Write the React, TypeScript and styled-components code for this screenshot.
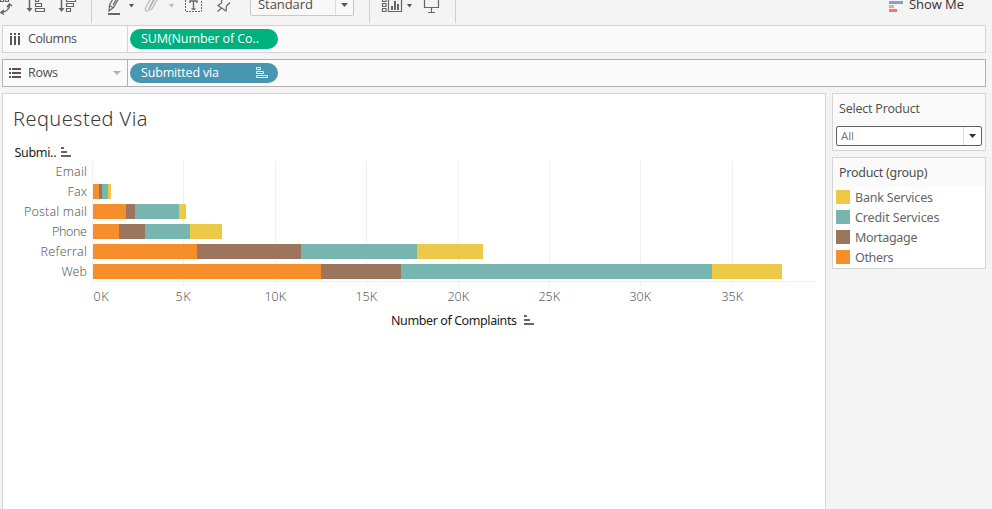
import React from 'react';
import styled, { createGlobalStyle } from 'styled-components';

const Global = createGlobalStyle`
  * { box-sizing: border-box; }
  body { margin: 0; background: #f4f4f4; font-family: "Noto Sans", "Open Sans", sans-serif; overflow: hidden; }
  svg { display: block; flex: none; }
`;

const Page = styled.div`
  width: 992px; height: 509px; overflow: hidden;
  display: flex; flex-direction: column; background: #f4f4f4; color: #4e4e4e;
`;
const Toolbar = styled.header`
  height: 25px; flex: none; display: flex; align-items: flex-start;
`;
const ToolGroup = styled.div<{ $w: number; $pad?: number }>`
  width: ${p => p.$w}px; height: 23px; flex: none; display: flex; padding-left: ${p => p.$pad ?? 0}px;
`;
const Divider = styled.div`
  width: 1px; height: 23px; flex: none; background: #d0d0d0;
`;
const FitSelect = styled.div`
  width: 104px; height: 16px; display: flex; background: #f8f8f8;
  border: 1px solid #c8c8c8; border-top: 0; border-radius: 0 0 2px 2px; padding-left: 7px;
`;
const FitArrow = styled.div`
  width: 18px; height: 15px; margin-left: auto; border-left: 1px solid #ddd; padding: 3px 0 0 5px;
`;
const ShowMe = styled.div`
  display: flex; margin-left: auto; padding-right: 28px; gap: 6px;
`;
const Lift = styled.div`
  height: 14px; margin-top: -4px;
`;
const Shelf = styled.section<{ $active?: boolean }>`
  height: 28px; width: 984px; flex: none; margin: 0 0 6px 2px; display: flex;
  background: #fafafa; border: 1px solid ${p => (p.$active ? '#b0b0b0' : '#d4d4d4')};
`;
const ShelfName = styled.div<{ $active?: boolean }>`
  width: 125px; display: flex; align-items: center; padding: 0 6px;
  border-right: 1px solid ${p => (p.$active ? '#b0b0b0' : '#d4d4d4')};
`;
const Pill = styled.div<{ $color: string }>`
  width: 148px; height: 20px; margin: 3px 2px; padding: 0 10px 0 10.5px; border-radius: 10px;
  display: flex; align-items: center; justify-content: space-between; background: ${p => p.$color};
`;
const Work = styled.main`
  display: flex; gap: 6px; flex: 1; margin-left: 2px; min-height: 0;
`;
const Sheet = styled.section`
  width: 824px; background: #fff; border: 1px solid #d4d4d4; border-bottom: 0;
`;
const SheetTitle = styled.div`
  height: 50px; padding: 18px 0 0 10px;
`;
const Side = styled.aside`
  width: 154px; display: flex; flex-direction: column; gap: 6px;
`;
const Card = styled.section<{ $h: number; $white?: boolean }>`
  height: ${p => p.$h}px; border: 1px solid #d4d4d4; background: ${p => (p.$white ? '#fff' : '#fafafa')};
`;
const CardHead = styled.div`
  height: 29px; padding: 0 6px; background: #fafafa; display: flex; align-items: center;
`;
const Select = styled.div`
  width: 146px; height: 20px; margin: 3px 0 0 3px; padding-left: 4px; background: #fff;
  border: 1px solid #5f5f5f; border-radius: 2px; display: flex; align-items: center; justify-content: space-between;
`;
const SelectArrow = styled.div`
  width: 18px; height: 18px; border-left: 1px solid #dcdcdc; display: flex; align-items: center; justify-content: center;
`;
const LegendRow = styled.div`
  height: 20px; padding-left: 3px; display: flex; align-items: center; gap: 5px;
`;
const Swatch = styled.span<{ $color: string }>`
  width: 14px; height: 14px; background: ${p => p.$color};
`;
const LabelSvg = styled.svg`overflow: visible;`;
const ShelfIcon = styled.svg`margin-right: 6px;`;
const MenuArrow = styled.svg`margin-left: auto;`;

type LabelProps = {
  text: string; width: number; size?: number; color?: string; weight?: number; font?: string; baseline?: number;
};

function Label({ text, width, size = 12.5, color = '#4e4e4e', weight = 400, font = 'Open Sans', baseline = 13 }: LabelProps) {
  return (
    <LabelSvg width={width} height="18">
      <text x="0" y={baseline} textLength={width} fontSize={size} fontWeight={weight} fontFamily={`"${font}", sans-serif`} fill={color}>{text}</text>
    </LabelSvg>
  );
}

const OTHERS = '#f58e2b', MORT = '#9c755f', CREDIT = '#76b5b0', BANK = '#ecc947';
const series = [OTHERS, MORT, CREDIT, BANK];
const rows = [
  { name: 'Email', left: 55.5, stops: [] as number[] },
  { name: 'Fax', left: 67.5, stops: [93, 99, 102, 108, 111] },
  { name: 'Postal mail', left: 24, stops: [93, 126, 135, 179, 186] },
  { name: 'Phone', left: 52, stops: [93, 119, 145, 190, 222] },
  { name: 'Referral', left: 40.5, stops: [93, 197, 301, 417, 483] },
  { name: 'Web', left: 61.5, stops: [93, 321, 401, 712, 782] },
];
const ticks = [
  { x: 92, label: '0K', left: 93.5, w: 15 }, { x: 183, label: '5K', left: 175.5, w: 15 },
  { x: 275, label: '10K', left: 264.5, w: 21.5 }, { x: 366, label: '15K', left: 355.5, w: 21.5 },
  { x: 458, label: '20K', left: 447.5, w: 21.5 }, { x: 549, label: '25K', left: 538.5, w: 21.5 },
  { x: 640, label: '30K', left: 629.5, w: 21.5 }, { x: 732, label: '35K', left: 721.5, w: 21.5 },
];
const legend = [
  { name: 'Bank Services', color: BANK, w: 78 },
  { name: 'Credit Services', color: CREDIT, w: 84.5 },
  { name: 'Mortagage', color: MORT, w: 62.5 },
  { name: 'Others', color: OTHERS, w: 38.5 },
];

const ChartSvg = styled.svg`
  font-family: "Noto Sans", sans-serif; font-size: 12.5px;
`;

function SortMark({ x, y }: { x: number; y: number }) {
  return <path d={`M${x} ${y}h3v2h-3z M${x} ${y + 4}h6v2h-6z M${x} ${y + 8}h10v2h-10z`} fill="#666" />;
}

function Chart() {
  return (
    <ChartSvg width="822" height="190" viewBox="3 144 822 190">
      <text x="14.5" y="157" textLength="42" fill="#1c1c1c">Submi..</text>
      <SortMark x={61} y={147} />
      {ticks.map(t => <rect key={t.x} x={t.x} y="161" width="1" height="125" fill="#f0f0f0" />)}
      <rect x="92" y="281" width="725" height="1" fill="#f0f0f0" />
      {rows.map((r, i) => (
        <g key={r.name}>
          <text x={r.left} y={176.4 + i * 20} textLength={87 - r.left} fontWeight="300" fill="#606060">{r.name}</text>
          {r.stops.slice(1).map((end, j) => (
            <rect key={j} x={r.stops[j]} y={164 + i * 20} width={end - r.stops[j]} height="15" fill={series[j]} />
          ))}
        </g>
      ))}
      {ticks.map(t => <text key={t.label} x={t.left} y="301.400" textLength={t.w} fontWeight="300" fill="#606060">{t.label}</text>)}
      <text x="391" y="325" textLength="126" fill="#1c1c1c">Number of Complaints</text>
      <SortMark x={524} y={315} />
    </ChartSvg>
  );
}

type ToolProps = { x: number; w: number; faded?: boolean; children: React.ReactNode };

function Tool({ x, w, faded, children }: ToolProps) {
  return (
    <svg width={w} height="23" viewBox={`${x} 0 ${w} 23`} fill="none" stroke={faded ? '#b8b8b8' : '#666'} strokeWidth="1.2">
      {children}
    </svg>
  );
}

function Caret({ x, color = '#555' }: { x: number; color?: string }) {
  return <path d={`M${x} 4h5l-2.500 3.500z`} fill={color} stroke="none" />;
}

function ToolbarContent() {
  return (
    <Toolbar>
      <ToolGroup $w={91}>
        <Tool x={0} w={20}>
          <path d="M1.500 12.500C6 12 9.500 9 9.500 4.500 M7 7l2.500-3 2.500 2 M4 10l-3 2.500 3 2" strokeWidth="1.500" />
          <path d="M0.500 0v1.500h3V0 M5.500 0v1.500h3V0" />
        </Tool>
        <Tool x={20} w={32}>
          <path d="M29.500 0v9" strokeWidth="1.500" />
          <path d="M26.500 8h6l-3 4z" fill="#666" stroke="none" />
          <path d="M35.500 -2h3v3.500h-3z M35.500 3.500h6v3h-6z M35.500 8.500h9v3h-9z" />
        </Tool>
        <Tool x={52} w={39}>
          <path d="M61.500 0v9" strokeWidth="1.500" />
          <path d="M58.500 8h6l-3 4z" fill="#666" stroke="none" />
          <path d="M66.500 -2h9v3.500h-9z M66.500 3.500h7v3h-7z M66.500 8.500h4v3h-4z" />
        </Tool>
      </ToolGroup>
      <Divider />
      <ToolGroup $w={158}>
        <Tool x={92} w={48}>
          <path d="M113.500 -2l-4 7-.500 6 4.500-3.500 5.500-9.500 M109.500 5.500l4 2.500 M113 5l3-5" />
          <path d="M108 13h12v2h-12z" fill="#666" stroke="none" />
          <Caret x={129} />
        </Tool>
        <Tool x={140} w={40} faded>
          <path d="M150.500 -1l-4.500 8c-2 4 1 5.500 3 2.500l6-10.500 M157.500 -1l-5 9c-1.500 3-4.500 2-3-1l4-7.500" />
          <Caret x={169} color="#b8b8b8" />
        </Tool>
        <Tool x={180} w={28}>
          <path d="M185.500 0v11.500h16V0" strokeWidth="1" strokeDasharray="2 1" />
          <path d="M190 3V1h7v2 M193.500 1v8 M191.500 9h4" strokeWidth="1.300" />
        </Tool>
        <Tool x={208} w={42}>
          <path d="M222 -1l-.500 4-3.500 2.500 8 5.500 .500-5 3.500-3.500 M221.500 8l-4 3.500" />
        </Tool>
      </ToolGroup>
      <ToolGroup $w={119}>
        <FitSelect>
          <Lift><Label text="Standard" width={55} size={13} /></Lift>
          <FitArrow><svg width="7" height="4" fill="#555"><path d="M0 0h7l-3.500 4z" /></svg></FitArrow>
        </FitSelect>
      </ToolGroup>
      <Divider />
      <ToolGroup $w={85}>
        <Tool x={370} w={46}>
          <path d="M382.500 -2h3.500v3.500h-3.500z M382.500 3.500h3.500v3h-3.500z M382.500 8.500h3.500v3h-3.500z M388.500 0v11.500h13V0" />
          <path d="M391 6h2v4h-2z M394 1h2v9h-2z M397 4h2v6h-2z" fill="#666" stroke="none" />
          <Caret x={407} />
        </Tool>
        <Tool x={416} w={39}>
          <path d="M424.500 0v7.500h14V0 M431.500 7.500v5 M428 12.500h7" />
        </Tool>
      </ToolGroup>
      <Divider />
      <ShowMe>
        <svg width="14" height="14">
          <path d="M0 1h14v3h-14z" fill="#80a3cb" />
          <path d="M0 5h5v3h-5z" fill="#f4a87c" />
          <path d="M0 9h8v3h-8z" fill="#f8727f" />
        </svg>
        <Lift><Label text="Show Me" width={55} size={13} color="#333" /></Lift>
      </ShowMe>
    </Toolbar>
  );
}

export default function App() {
  return (
    <>
      <Global />
      <Page>
        <ToolbarContent />
        <Shelf>
          <ShelfName>
            <ShelfIcon width="13" height="12" fill="#555"><path d="M1 0h2v2h-2z M5 0h2v2h-2z M9 0h2v2h-2z M1 3h2v9h-2z M5 3h2v9h-2z M9 3h2v9h-2z" /></ShelfIcon>
            <Label text="Columns" width={49} />
          </ShelfName>
          <Pill $color="#00b180"><Label text="SUM(Number of Co.." width={118} color="#fff" /></Pill>
        </Shelf>
        <Shelf $active>
          <ShelfName $active>
            <ShelfIcon width="13" height="12" fill="#555"><path d="M0 1h2v2h-2z M0 5h2v2h-2z M0 9h2v2h-2z M3 1h9v2h-9z M3 5h9v2h-9z M3 9h9v2h-9z" /></ShelfIcon>
            <Label text="Rows" width={30} />
            <MenuArrow width="8" height="4" fill="#b0b0b0"><path d="M0 0h8l-4 4z" /></MenuArrow>
          </ShelfName>
          <Pill $color="#4996b2">
            <Label text="Submitted via" width={78} color="#fff" />
            <svg width="12" height="12" fill="none" stroke="#e4f1f6"><path d="M.5 .5h4v2h-4z M.5 4.500h7v2h-7z M.5 8.500h11v2h-11z" /></svg>
          </Pill>
        </Shelf>
        <Work>
          <Sheet>
            <SheetTitle><Label text="Requested Via" width={134.5} size={20} weight={300} font="Noto Sans" color="#3c3c3c" baseline={13.5} /></SheetTitle>
            <Chart />
          </Sheet>
          <Side>
            <Card $h={58}>
              <CardHead><Label text="Select Product" width={81} /></CardHead>
              <Select>
                <Label text="All" width={13} size={11.5} color="#777" />
                <SelectArrow><svg width="7" height="4" fill="#333"><path d="M0 0h7l-3.500 4z" /></svg></SelectArrow>
              </Select>
            </Card>
            <Card $h={112} $white>
              <CardHead><Label text="Product (group)" width={88.5} font="Noto Sans" /></CardHead>
              {legend.map(l => (
                <LegendRow key={l.name}>
                  <Swatch $color={l.color} />
                  <Label font="Noto Sans" text={l.name} width={l.w} color="#666" baseline={13.5} />
                </LegendRow>
              ))}
            </Card>
          </Side>
        </Work>
      </Page>
    </>
  );
}
